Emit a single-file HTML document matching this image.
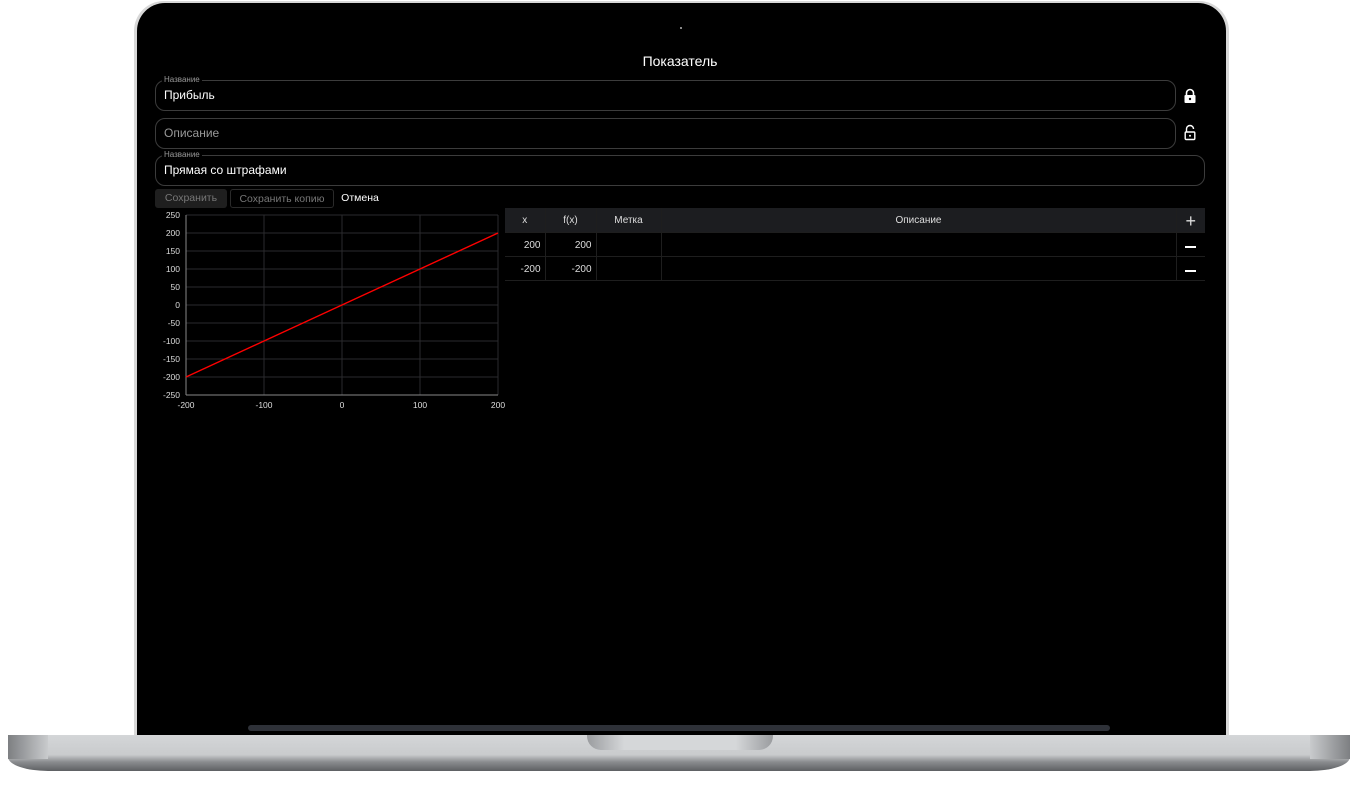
<!DOCTYPE html>
<html><head><meta charset="utf-8"><style>
*{box-sizing:border-box;margin:0;padding:0}
body{width:1352px;height:785px;background:#fff;position:relative;overflow:hidden;font-family:"Liberation Sans",sans-serif;color:#fff}
.lid{position:absolute;left:134px;top:1px;width:1095px;height:740px;border-radius:30px 30px 0 0;background:#d8d8d8}
.scr{position:absolute;left:137px;top:3px;width:1089px;height:734px;border-radius:28px 28px 0 0;background:#000}
.base{position:absolute;left:8px;top:735px;width:1342px;height:36px;border-radius:0 0 40px 40px/0 0 14px 14px;background:linear-gradient(#d4d6d8 0,#c9cbcd 55%,#8a8c8f 75%,#5e6063 100%)}
.base:before{content:"";position:absolute;left:0;top:0;width:40px;height:24px;background:linear-gradient(90deg,#7d7f82,#c9cbcd)}
.base:after{content:"";position:absolute;right:0;top:0;width:40px;height:24px;background:linear-gradient(270deg,#7d7f82,#c9cbcd)}
.notch{position:absolute;left:587px;top:735px;width:186px;height:15px;border-radius:0 0 14px 14px;background:linear-gradient(90deg,#9a9c9f,#d5d7d9 20%,#d5d7d9 80%,#9a9c9f)}
.bar{position:absolute;left:248px;top:725px;width:862px;height:6px;border-radius:3px;background:#2e3138}
.t{position:absolute;font-size:14px;left:0;width:1360px;text-align:center;top:53px}
.f{position:absolute;border:1px solid #3c3c3c;border-radius:10px;height:31px;font-size:12px;padding:7px 8px}
.lab{position:absolute;top:-6px;left:6px;font-size:8px;color:#999;background:#000;padding:0 2px;line-height:10px}
.btn{position:absolute;top:189px;height:19px;font-size:10.5px;line-height:19px;text-align:center;border-radius:3px}
table{position:absolute;left:505px;top:208px;width:700px;border-collapse:collapse;font-size:10px}
td{height:24px;border-right:1px solid #1e1e1e;border-bottom:1px solid #1e1e1e;color:#ddd;padding-top:2px}
tr.h td{background:#1c1d20;text-align:center;padding-top:0}
.m{display:inline-block;width:11px;height:2px;background:#fff;vertical-align:middle}
</style></head><body>
<div class="lid"></div><div class="scr"></div>
<div style="position:absolute;left:680px;top:27px;width:2px;height:2px;background:#888"></div>
<div class="t">Показатель</div>
<div class="f" style="left:155px;top:80px;width:1021px"><span class="lab">Название</span>Прибыль</div>
<div class="f" style="left:155px;top:118px;width:1021px;color:#999">Описание</div>
<div class="f" style="left:155px;top:155px;width:1050px"><span class="lab">Название</span>Прямая со штрафами</div>
<svg style="position:absolute;left:1183px;top:88px" width="14" height="16" viewBox="0 0 14 16"><path d="M3.5 7V5a3.5 3.5 0 0 1 7 0v2" fill="none" stroke="#fff" stroke-width="1.6"/><rect x="1.5" y="7" width="11" height="8" rx="1" fill="#fff"/><circle cx="7" cy="11" r="1.2" fill="#000"/></svg>
<svg style="position:absolute;left:1183px;top:124px" width="14" height="17" viewBox="0 0 14 17"><path d="M3.5 8V5a3.5 3.5 0 0 1 7 0" fill="none" stroke="#fff" stroke-width="1.4"/><rect x="2.2" y="8" width="9.6" height="7.5" rx="1" fill="none" stroke="#fff" stroke-width="1.4"/><circle cx="7" cy="11.7" r="1" fill="#fff"/></svg>
<div class="btn" style="left:155px;width:72px;background:#1f1f1f;color:#777">Сохранить</div>
<div class="btn" style="left:230px;width:104px;border:1px solid #2a2a2a;color:#777">Сохранить копию</div>
<div class="btn" style="left:336px;width:48px">Отмена</div>
<svg style="position:absolute;left:150px;top:205px" width="360" height="210">
<g stroke="#2a2a2e" stroke-width="1">
<line x1="36" y1="10" x2="348" y2="10"/><line x1="36" y1="28" x2="348" y2="28"/><line x1="36" y1="46" x2="348" y2="46"/><line x1="36" y1="64" x2="348" y2="64"/><line x1="36" y1="82" x2="348" y2="82"/><line x1="36" y1="100" x2="348" y2="100"/><line x1="36" y1="118" x2="348" y2="118"/><line x1="36" y1="136" x2="348" y2="136"/><line x1="36" y1="154" x2="348" y2="154"/><line x1="36" y1="172" x2="348" y2="172"/>
<line x1="114" y1="10" x2="114" y2="190"/><line x1="192" y1="10" x2="192" y2="190"/><line x1="270" y1="10" x2="270" y2="190"/><line x1="348" y1="10" x2="348" y2="190"/>
</g>
<g stroke="#888"><line x1="36" y1="10" x2="36" y2="190"/><line x1="36" y1="190" x2="348" y2="190"/></g>
<line x1="36" y1="172" x2="348" y2="28" stroke="#f00" stroke-width="1.4"/>
<g fill="#ddd" font-size="8.5" font-family="Liberation Sans" text-anchor="end">
<text x="30" y="13">250</text><text x="30" y="31">200</text><text x="30" y="49">150</text><text x="30" y="67">100</text><text x="30" y="85">50</text><text x="30" y="103">0</text><text x="30" y="121">-50</text><text x="30" y="139">-100</text><text x="30" y="157">-150</text><text x="30" y="175">-200</text><text x="30" y="193">-250</text>
</g>
<g fill="#ddd" font-size="8.5" font-family="Liberation Sans" text-anchor="middle">
<text x="36" y="203">-200</text><text x="114" y="203">-100</text><text x="192" y="203">0</text><text x="270" y="203">100</text><text x="348" y="203">200</text>
</g></svg>
<table>
<tr class="h"><td style="width:40px">x</td><td style="width:51px">f(x)</td><td style="width:65px">Метка</td><td>Описание</td><td style="width:29px;font-size:18px;border-right:none;padding-top:3px">+</td></tr>
<tr><td style="text-align:right;padding-right:4px">200</td><td style="text-align:right;padding-right:4px">200</td><td></td><td></td><td style="text-align:center;border-right:none;padding-top:5px"><span class="m"></span></td></tr>
<tr><td style="text-align:right;padding-right:4px">-200</td><td style="text-align:right;padding-right:4px">-200</td><td></td><td></td><td style="text-align:center;border-right:none;padding-top:5px"><span class="m"></span></td></tr>
</table>
<div class="bar"></div>
<div class="base"></div>
<div class="notch"></div>
</body></html>
